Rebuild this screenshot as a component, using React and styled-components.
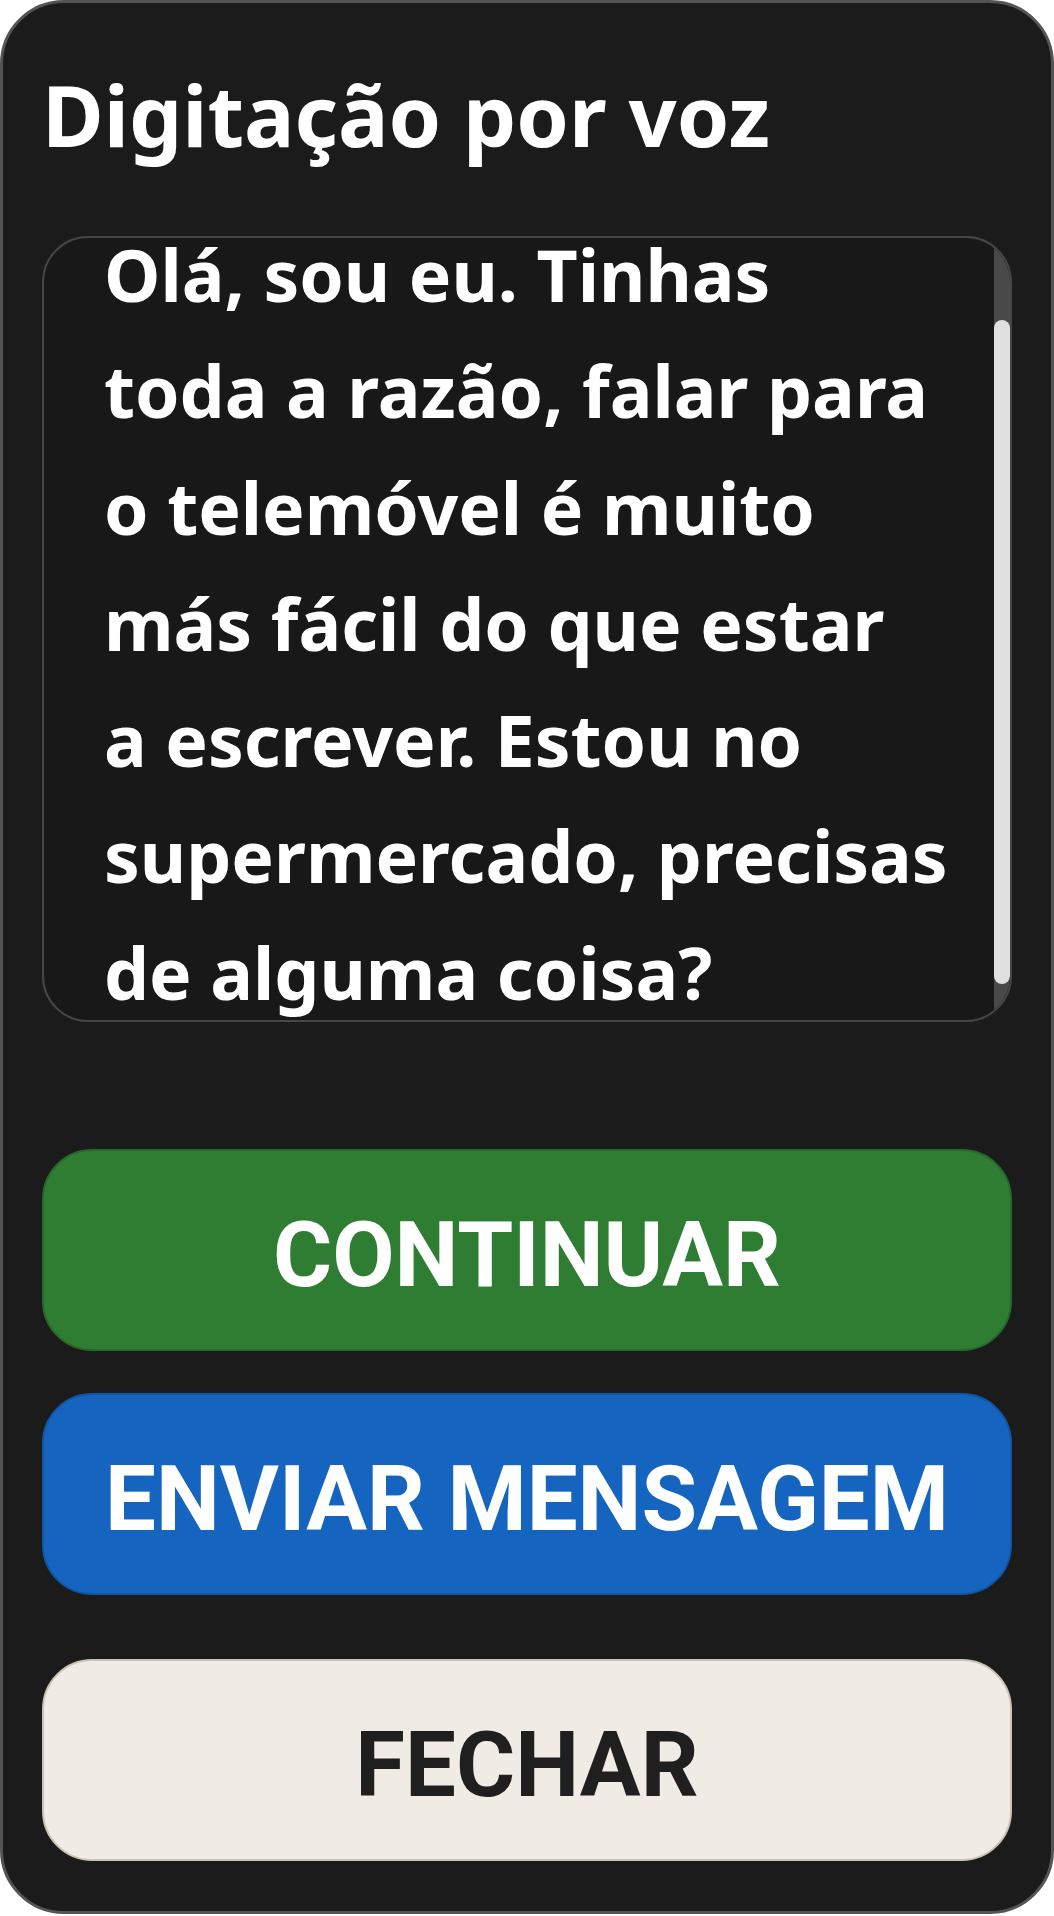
import React, { useLayoutEffect, useRef, useState } from "react";
import styled, { createGlobalStyle } from "styled-components";

const message = `Olá, sou eu. Tinhas
toda a razão, falar para
o telemóvel é muito
más fácil do que estar
a escrever. Estou no
supermercado, precisas
de alguma coisa?`;

const GlobalStyle = createGlobalStyle`
  html, body {
    margin: 0;
    padding: 0;
    background: #ffffff;
  }
  * {
    box-sizing: border-box;
  }
`;

const Card = styled.div`
  width: 1054px;
  height: 1914px;
  display: flex;
  flex-direction: column;
  padding: 61px 39px 48px;
  background: #1b1b1b;
  border: 3px solid #545454;
  border-radius: 64px;
`;

const Title = styled.h1`
  margin: 0 0 70px;
  font-family: "Noto Sans", "Open Sans", sans-serif;
  font-weight: 700;
  font-size: 84.3px;
  line-height: 102px;
  color: #ffffff;
`;

const TextFrame = styled.div`
  position: relative;
  height: 786px;
  overflow: hidden;
  background: #181818;
  border: 2px solid #464646;
  border-radius: 46px;
`;

const Scroller = styled.div`
  height: 100%;
  overflow-y: scroll;
  scrollbar-width: none;
  padding: 76px 16px 32px 60px;
  font-family: "Noto Sans", "Open Sans", sans-serif;
  font-weight: 700;
  font-size: 71.4px;
  line-height: 116.3px;
  color: #ffffff;
  white-space: pre-line;

  &::-webkit-scrollbar {
    display: none;
  }
`;

const Track = styled.div`
  position: absolute;
  top: 0;
  right: 0;
  bottom: 0;
  width: 16px;
  background: #494949;
`;

const Thumb = styled.div`
  position: absolute;
  left: 0;
  right: 0;
  background: #e0e0e0;
  border-radius: 8px;
`;

const Actions = styled.div`
  display: flex;
  flex-direction: column;
  margin-top: 127px;
`;

const variants = {
  continue: { bg: "#2e7d32", border: "#27692a", color: "#ffffff" },
  send: { bg: "#1565c0", border: "#1155a3", color: "#ffffff" },
  close: { bg: "#f0ece5", border: "#cbc2b2", color: "#1f1f1f" },
};

const ActionButton = styled.button`
  height: 202px;
  margin-top: ${(p) => p.$gap || 0}px;
  display: flex;
  align-items: center;
  justify-content: center;
  padding: 10px 0 0;
  background: ${(p) => variants[p.$variant].bg};
  border: 2px solid ${(p) => variants[p.$variant].border};
  border-radius: 50px;
  font-family: Roboto, "Liberation Sans", sans-serif;
  font-weight: 700;
  font-size: 90.5px;
  line-height: 1;
  color: ${(p) => variants[p.$variant].color};
  cursor: pointer;
`;

export default function App() {
  const boxRef = useRef(null);
  const [thumb, setThumb] = useState({ top: 82, height: 663 });

  useLayoutEffect(() => {
    const el = boxRef.current;
    if (!el) return;
    el.scrollTop = 97;
    const ratio = el.clientHeight / el.scrollHeight;
    setThumb({
      top: el.scrollTop * ratio,
      height: el.clientHeight * ratio,
    });
  }, []);

  return (
    <>
      <GlobalStyle />
      <Card>
        <Title>Digitação por voz</Title>
        <TextFrame>
          <Scroller ref={boxRef}>{message}</Scroller>
          <Track>
            <Thumb style={{ top: thumb.top, height: thumb.height }} />
          </Track>
        </TextFrame>
        <Actions>
          <ActionButton $variant="continue">CONTINUAR</ActionButton>
          <ActionButton $variant="send" $gap={42}>
            ENVIAR MENSAGEM
          </ActionButton>
          <ActionButton $variant="close" $gap={64}>
            FECHAR
          </ActionButton>
        </Actions>
      </Card>
    </>
  );
}
